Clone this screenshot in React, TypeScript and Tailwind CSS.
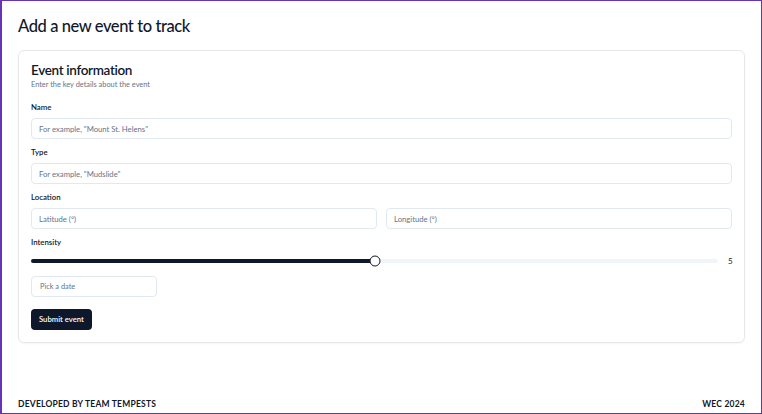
import { useState } from "react";

function Field({ label, children }: { label: string; children: React.ReactNode }) {
  return (
    <div className="flex flex-col">
      <label className="mb-[6px] text-[7.8px] leading-[10px] font-semibold text-[#0f172a]">{label}</label>
      {children}
    </div>
  );
}

function TextInput({ placeholder }: { placeholder: string }) {
  return (
    <input
      placeholder={placeholder}
      className="h-[21px] w-full rounded-[4px] border border-[#e2e8f0] bg-white px-[7px] text-[7.7px] text-[#0f172a] placeholder:text-[#64748b] outline-none"
    />
  );
}

export default function App() {
  const [intensity] = useState(5);
  const pct = (intensity / 10) * 100;

  return (
    <div
      className="flex h-[414px] flex-col border border-l-2 border-[#6a32b5] bg-white text-[#0f172a]"
      style={{ fontFamily: 'Lato, "Open Sans", sans-serif' }}
    >
      <main className="px-4 pt-[13px]">
        <h1 className="text-[16.5px] leading-[24px] font-medium tracking-tight">Add a new event to track</h1>

        <div className="mt-[12px] rounded-[6px] border border-[#e5e7eb] px-3 pt-[11px] pb-3 shadow-[0_1px_2px_rgba(0,0,0,0.04)]">
          <h2 className="text-[13.5px] leading-[16px] font-semibold tracking-tight">Event information</h2>
          <p className="mt-[2px] text-[7.4px] leading-[10px] text-[#64748b]">Enter the key details about the event</p>

          <div className="mt-[12px] flex flex-col gap-[8px]">
            <Field label="Name">
              <TextInput placeholder={'For example, "Mount St. Helens"'} />
            </Field>
            <Field label="Type">
              <TextInput placeholder={'For example, "Mudslide"'} />
            </Field>
            <Field label="Location">
              <div className="grid grid-cols-2 gap-[9px]">
                <TextInput placeholder="Latitude (°)" />
                <TextInput placeholder="Longitude (°)" />
              </div>
            </Field>
            <div className="flex flex-col">
              <label className="text-[7.8px] leading-[10px] font-semibold">Intensity</label>
              <div className="mt-[9px] flex h-[10px] items-center gap-[10px]">
                <div className="relative h-[4px] flex-1 rounded-full bg-[#f1f5f9]">
                  <div className="h-full rounded-full bg-[#0f172a]" style={{ width: `${pct}%` }} />
                  <div
                    className="absolute top-1/2 h-[11px] w-[11px] -translate-x-1/2 -translate-y-1/2 rounded-full border-[1.5px] border-[#0f172a] bg-white"
                    style={{ left: `${pct}%` }}
                  />
                </div>
                <span className="w-[4px] text-[8px] leading-[10px] text-[#0f172a]">{intensity}</span>
              </div>
            </div>
          </div>

          <button className="mt-[10px] flex h-[21px] w-[126px] items-center rounded-[4px] border border-[#e2e8f0] bg-white px-[8px] text-left text-[7.4px] text-[#64748b]">
            Pick a date
          </button>

          <button className="mt-[12px] flex h-[21px] items-center rounded-[4px] bg-[#0f172a] px-[8px] text-[7.7px] font-semibold text-white">
            Submit event
          </button>
        </div>
      </main>

      <footer className="mt-auto flex items-center justify-between px-4 pb-[4px] text-[8.5px] leading-[10px] font-bold tracking-wide">
        <span>DEVELOPED BY TEAM TEMPESTS</span>
        <span>WEC 2024</span>
      </footer>
    </div>
  );
}
